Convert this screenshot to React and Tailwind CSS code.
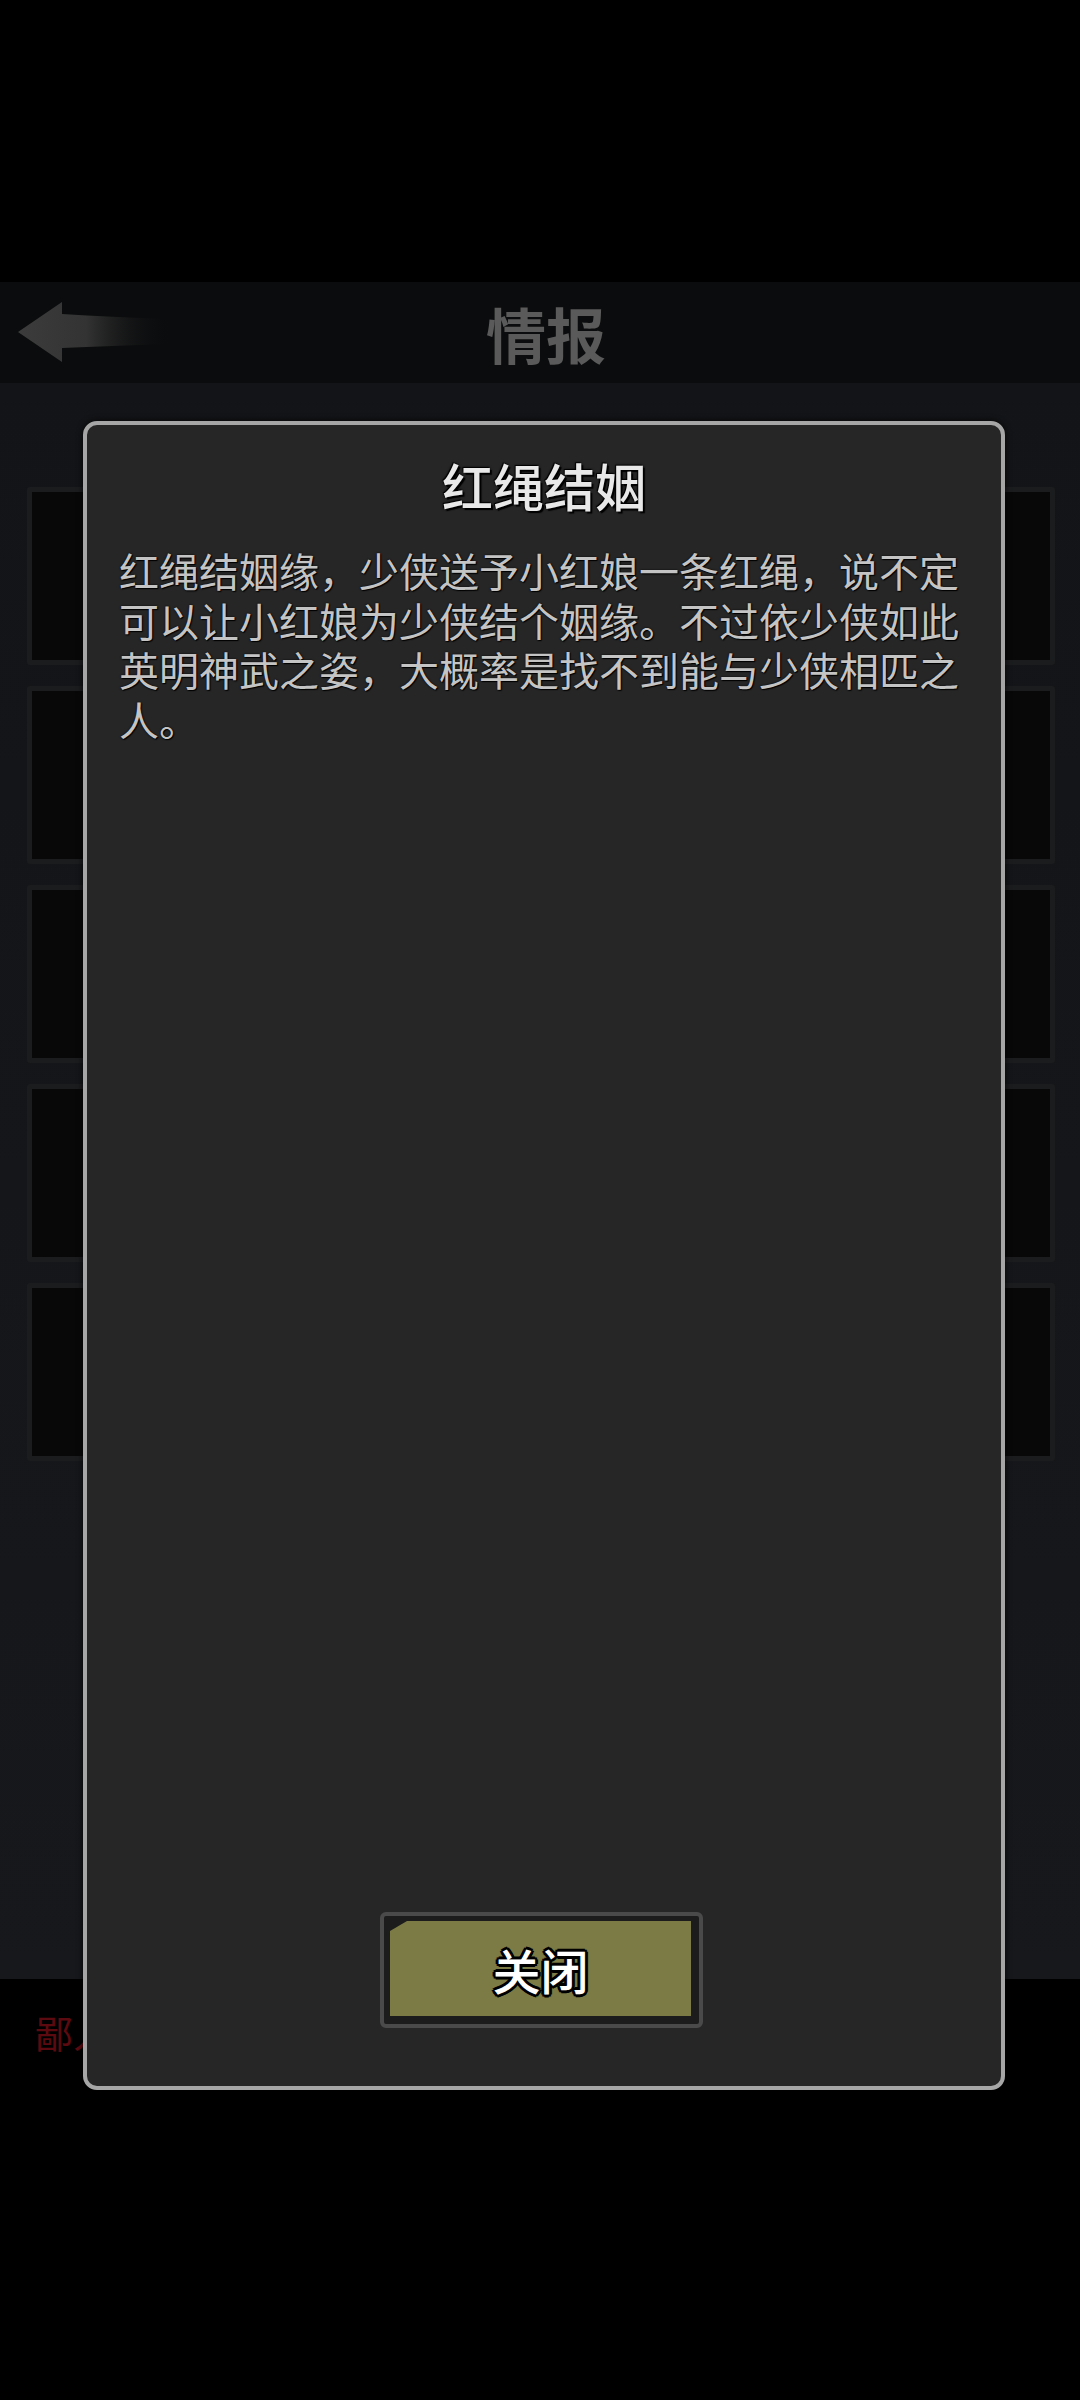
import React from 'react';

const cards = [0, 1, 2, 3, 4];

const BackArrow = () => (
    <svg width="170" height="80" viewBox="0 0 170 80" className="absolute left-0 top-[10px]">
        <defs>
            <linearGradient id="arrowFade" x1="0" y1="0" x2="1" y2="0">
                <stop offset="0" stopColor="#3c3c3c" />
                <stop offset="0.45" stopColor="#333333" />
                <stop offset="1" stopColor="#0b0c0d" stopOpacity="0" />
            </linearGradient>
        </defs>
        <path d="M18 40 L62 10 L62 22 Q110 25 170 27 L170 52 Q110 54 62 56 L62 70 Z" fill="url(#arrowFade)" />
    </svg>
);

const App = () => {
    return (
        <div className="relative w-[1080px] h-[2400px] overflow-hidden bg-black font-['Noto_Sans_CJK_SC',sans-serif]">
            <div className="h-[282px]" />

            {/* header */}
            <header className="relative h-[101px] bg-[#0b0c0d] flex items-center justify-center">
                <BackArrow />
                <h1 className="pl-[12px] text-[60px] leading-none font-bold text-[#5a5a5a]">情报</h1>
            </header>

            {/* list behind the dialog */}
            <main className="h-[1596px] bg-gradient-to-b from-[#131417] to-[#16181b] pt-[104px] pl-[27px] pr-[25px] flex flex-col gap-[21px]">
                {cards.map((i) => (
                    <div key={i} className="h-[178px] rounded-[3px] border-[5px] border-[#1b1c1e] bg-[#080808]" />
                ))}
            </main>

            <div className="pt-[30px] pl-[35px]">
                <span className="text-[38px] leading-[1.2] text-[#5c0a10]">鄙人不才</span>
            </div>

            {/* dialog */}
            <div className="absolute left-[83px] top-[421px] w-[922px] h-[1669px] rounded-[14px] border-[4px] border-[#a6a6a6] bg-[#262626] shadow-[0_0_6px_rgba(0,0,0,0.8)] flex flex-col">
                <h2 className="pt-[30px] text-center text-[51px] leading-[60px] font-medium text-[#e8e8e8] [text-shadow:0_0_3px_#000,2px_2px_1px_#000,-1px_-1px_1px_#000]">
                    红绳结姻
                </h2>
                <p className="mt-[31px] px-[32px] text-[40px] leading-[49.5px] text-[#c4c4c4] [text-shadow:0_0_2px_#000,1px_1px_1px_#000]">
                    红绳结姻缘，少侠送予小红娘一条红绳，说不定可以让小红娘为少侠结个姻缘。不过依少侠如此英明神武之姿，大概率是找不到能与少侠相匹之人。
                </p>

                <div className="mt-auto mb-[58px] ml-[293px] w-[323px] h-[116px] rounded-[6px] border-[4px] border-[#4a4a4a] bg-[#1c1c1c] pt-[5px] pl-[6px] pr-[8px] pb-[8px]">
                    <div className="h-full bg-[#7c7a45] [clip-path:polygon(17px_0,100%_0,100%_100%,0_100%,0_10px)] flex items-center justify-center">
                        <span className="text-[48px] leading-none font-medium text-white [text-shadow:0_0_3px_#000,3px_0_0_#000,-3px_0_0_#000,0_3px_0_#000,0_-3px_0_#000,2px_2px_0_#000,-2px_-2px_0_#000,2px_-2px_0_#000,-2px_2px_0_#000]">
                            关闭
                        </span>
                    </div>
                </div>
            </div>
        </div>
    );
};

export default App;
